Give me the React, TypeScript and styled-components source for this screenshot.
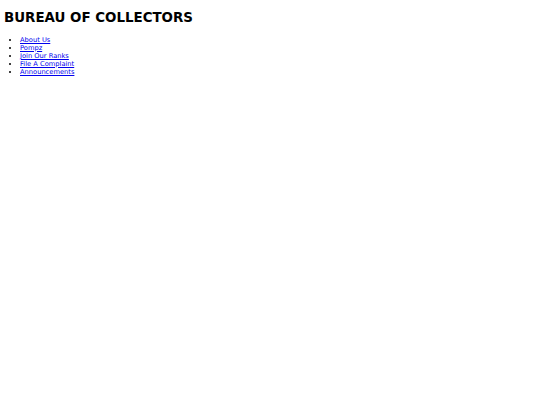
import React from "react";
import styled, { createGlobalStyle } from "styled-components";

const Global = createGlobalStyle`
  html, body { margin: 0; padding: 0; background: #fff; }
  body { font-family: "DejaVu Sans", sans-serif; color: #000; }
`;

const Page = styled.div`
  padding: 4px;
`;

const Title = styled.h1`
  font-size: 13.4px;
  font-weight: bold;
  margin: 6px 0 9.6px;
  line-height: 16.2px;
`;

const NavList = styled.ul`
  margin: 0;
  padding-left: 16px;
  font-size: 6.7px;
  line-height: 8px;
`;

const NavLink = styled.a`
  color: #0000ee;
  text-decoration: underline;
`;

const items = ["About Us", "Pompz", "Join Our Ranks", "File A Complaint", "Announcements"];

export default function App() {
  return (
    <>
      <Global />
      <Page>
        <Title>BUREAU OF COLLECTORS</Title>
        <NavList>
          {items.map((t) => (
            <li key={t}>
              <NavLink href="#">{t}</NavLink>
            </li>
          ))}
        </NavList>
      </Page>
    </>
  );
}
